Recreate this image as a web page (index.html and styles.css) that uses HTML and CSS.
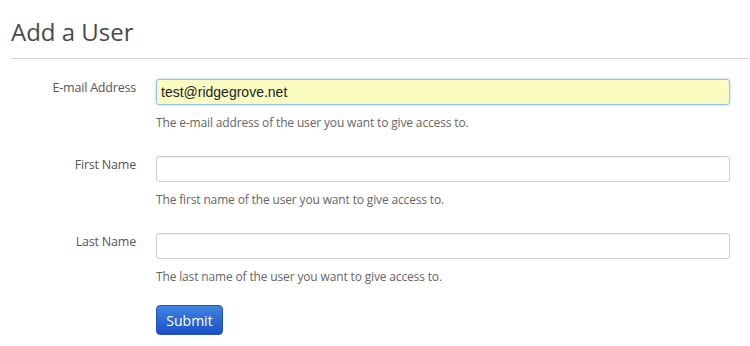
FILE: index.html
```html
<!DOCTYPE html>
<html>
<head>
  <title>Add a User</title>
  <meta charset="UTF-8" />
  <link rel="stylesheet" href="styles.css">
</head>
<body>
  <div class="page">
    <h1>Add a User</h1>
    <hr class="divider" />

    <!-- Add User Form -->
    <form class="user-form">
      <div class="form-group">
        <label for="email">E-mail Address</label>
        <div class="controls">
          <input type="text" id="email" class="field field-active" value="test@ridgegrove.net" />
          <p class="help">The e-mail address of the user you want to give access to.</p>
        </div>
      </div>

      <div class="form-group">
        <label for="firstName">First Name</label>
        <div class="controls">
          <input type="text" id="firstName" class="field" />
          <p class="help">The first name of the user you want to give access to.</p>
        </div>
      </div>

      <div class="form-group">
        <label for="lastName">Last Name</label>
        <div class="controls">
          <input type="text" id="lastName" class="field" />
          <p class="help">The last name of the user you want to give access to.</p>
        </div>
      </div>

      <div class="form-actions">
        <button type="submit">Submit</button>
      </div>
    </form>
  </div>
</body>
</html>
```

FILE: styles.css
```css
body {
  font-family: "Open Sans", sans-serif;
  background: #fff;
  color: #555;
  margin: 0;
}

.page {
  padding: 16px 1px 0 11px;
}

h1 {
  margin: 0;
  font-size: 24px;
  line-height: 32px;
  font-weight: 400;
  color: #4a4a4a;
}

.divider {
  margin: 10px 0 20px;
  border: none;
  border-top: 1px solid #d6d6d6;
  height: 0;
}

.form-group {
  display: flex;
  gap: 20px;
  margin-bottom: 24px;
}

label {
  width: 125px;
  flex-shrink: 0;
  text-align: right;
  font-size: 12.5px;
  letter-spacing: -0.2px;
  line-height: 17px;
  color: #555;
}

.controls {
  flex: 1;
  margin-right: 19px;
}

.field {
  display: block;
  box-sizing: border-box;
  width: 100%;
  height: 26px;
  margin: 0;
  padding: 0 4px;
  font-family: "Liberation Sans", Arial, sans-serif;
  font-size: 14px;
  color: #222;
  background: #fff;
  border: 1px solid #ccc;
  border-radius: 3px;
  box-shadow: inset 0 1px 1px rgba(0, 0, 0, 0.05);
}

.field-active {
  background: #fafcc1;
  border-color: #92c3ea;
  box-shadow: 0 0 3px rgba(82, 168, 236, 0.5);
}

.help {
  margin: 9px 0 0;
  font-size: 12px;
  letter-spacing: -0.15px;
  line-height: 18px;
  color: #666;
}

.form-actions {
  margin-top: -5px;
  padding-left: 145px;
}

button {
  width: 67px;
  height: 30px;
  padding: 0;
  font-family: "Open Sans", sans-serif;
  font-size: 14px;
  color: #fff;
  background: linear-gradient(to bottom, #3f84e0, #1b4fc6);
  border: 1px solid #2252b8;
  border-radius: 4px;
  cursor: pointer;
}
```
